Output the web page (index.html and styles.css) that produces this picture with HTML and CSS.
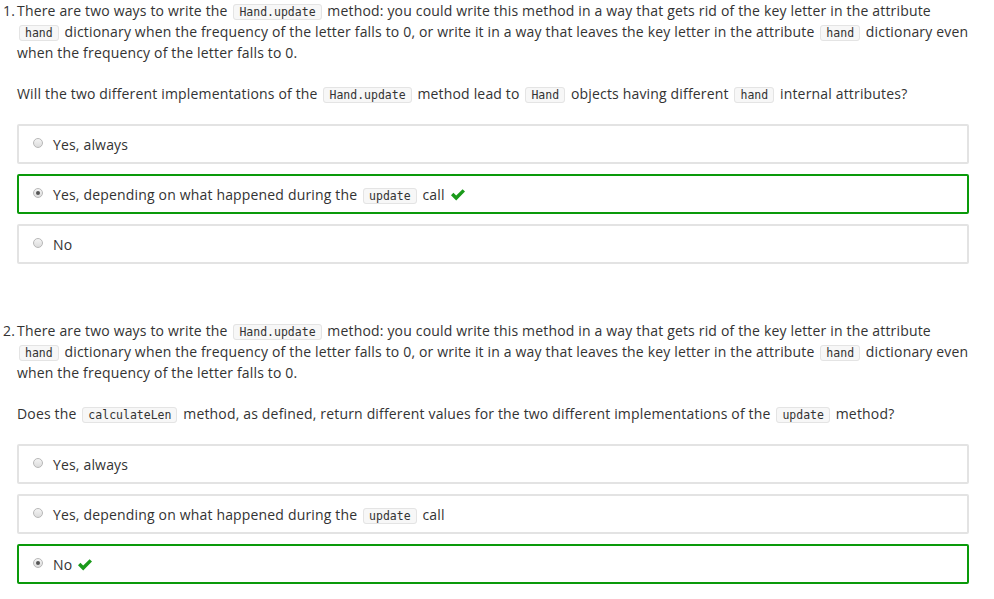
FILE: index.html
```html
<!DOCTYPE html>
<html>
<head>
<meta charset="utf-8">
<link rel="stylesheet" href="styles.css">
</head>
<body>
<div class="page">
  <section class="question">
    <div class="prompt">
      <span class="num">1.</span>
      <div class="body">
        <p>There are two ways to write the <code>Hand.update</code> method: you could write this method in a way that gets rid of the key letter in the attribute <code>hand</code> dictionary when the frequency of the letter falls to 0, or write it in a way that leaves the key letter in the attribute <code>hand</code> dictionary even when the frequency of the letter falls to 0.</p>
        <p>Will the two different implementations of the <code>Hand.update</code> method lead to <code>Hand</code> objects having different <code>hand</code> internal attributes?</p>
      </div>
    </div>
    <div class="options">
      <div class="option"><span class="radio"></span><span>Yes, always</span></div>
      <div class="option correct"><span class="radio checked"></span><span>Yes, depending on what happened during the <code>update</code> call</span><svg class="check" viewBox="0 0 16 13" width="16" height="13"><path d="M1 7.2 L3.4 4.8 L6.2 7.6 L12.6 1.2 L15 3.6 L6.2 12.4 Z" fill="#1a9a1a"/></svg></div>
      <div class="option"><span class="radio"></span><span>No</span></div>
    </div>
  </section>

  <section class="question">
    <div class="prompt">
      <span class="num">2.</span>
      <div class="body">
        <p>There are two ways to write the <code>Hand.update</code> method: you could write this method in a way that gets rid of the key letter in the attribute <code>hand</code> dictionary when the frequency of the letter falls to 0, or write it in a way that leaves the key letter in the attribute <code>hand</code> dictionary even when the frequency of the letter falls to 0.</p>
        <p>Does the <code>calculateLen</code> method, as defined, return different values for the two different implementations of the <code>update</code> method?</p>
      </div>
    </div>
    <div class="options">
      <div class="option"><span class="radio"></span><span>Yes, always</span></div>
      <div class="option"><span class="radio"></span><span>Yes, depending on what happened during the <code>update</code> call</span></div>
      <div class="option correct"><span class="radio checked"></span><span>No</span><svg class="check" viewBox="0 0 16 13" width="16" height="13"><path d="M1 7.2 L3.4 4.8 L6.2 7.6 L12.6 1.2 L15 3.6 L6.2 12.4 Z" fill="#1a9a1a"/></svg></div>
    </div>
  </section>
</div>
</body>
</html>
```

FILE: styles.css
```css
html, body {
  margin: 0;
  padding: 0;
  background: #ffffff;
}

body {
  font-family: "Open Sans", "Liberation Sans", sans-serif;
  font-size: 14px;
  line-height: 21px;
  letter-spacing: 0.17px;
  color: #333333;
}

.page {
  width: 969px;
  padding-left: 3px;
  box-sizing: border-box;
}

.question + .question {
  margin-top: 56px;
}

.prompt {
  display: flex;
}

.num {
  width: 14px;
  flex: none;
}

.body {
  flex: 1;
  min-width: 0;
}

.body p {
  margin: 0;
}

.body p + p {
  margin-top: 20px;
}

code {
  font-family: "DejaVu Sans Mono", "Liberation Mono", monospace;
  font-size: 11.5px;
  line-height: 12px;
  letter-spacing: 0;
  color: #333333;
  background: #f7f7f7;
  border: 1px solid #e4e4e4;
  border-radius: 3px;
  padding: 0 5px;
  margin: 0 2px;
}

.options {
  margin-top: 20px;
  margin-left: 14px;
  display: flex;
  flex-direction: column;
  gap: 10px;
}

.option {
  display: flex;
  align-items: center;
  height: 40px;
  box-sizing: border-box;
  border: 2px solid #e3e3e3;
  border-radius: 2px;
  padding: 0 14px;
}

.option.correct {
  border-color: #0a9a0a;
}

.radio {
  flex: none;
  width: 10px;
  height: 10px;
  border-radius: 50%;
  border: 1px solid #b8b8b8;
  background: linear-gradient(#f4f4f4, #dcdcdc);
  box-sizing: border-box;
  margin-right: 10px;
  margin-top: -2px;
  position: relative;
}

.radio.checked::after {
  content: "";
  position: absolute;
  left: 2px;
  top: 2px;
  width: 4px;
  height: 4px;
  border-radius: 50%;
  background: #555555;
}

.check {
  margin-left: 5px;
  flex: none;
}
```
